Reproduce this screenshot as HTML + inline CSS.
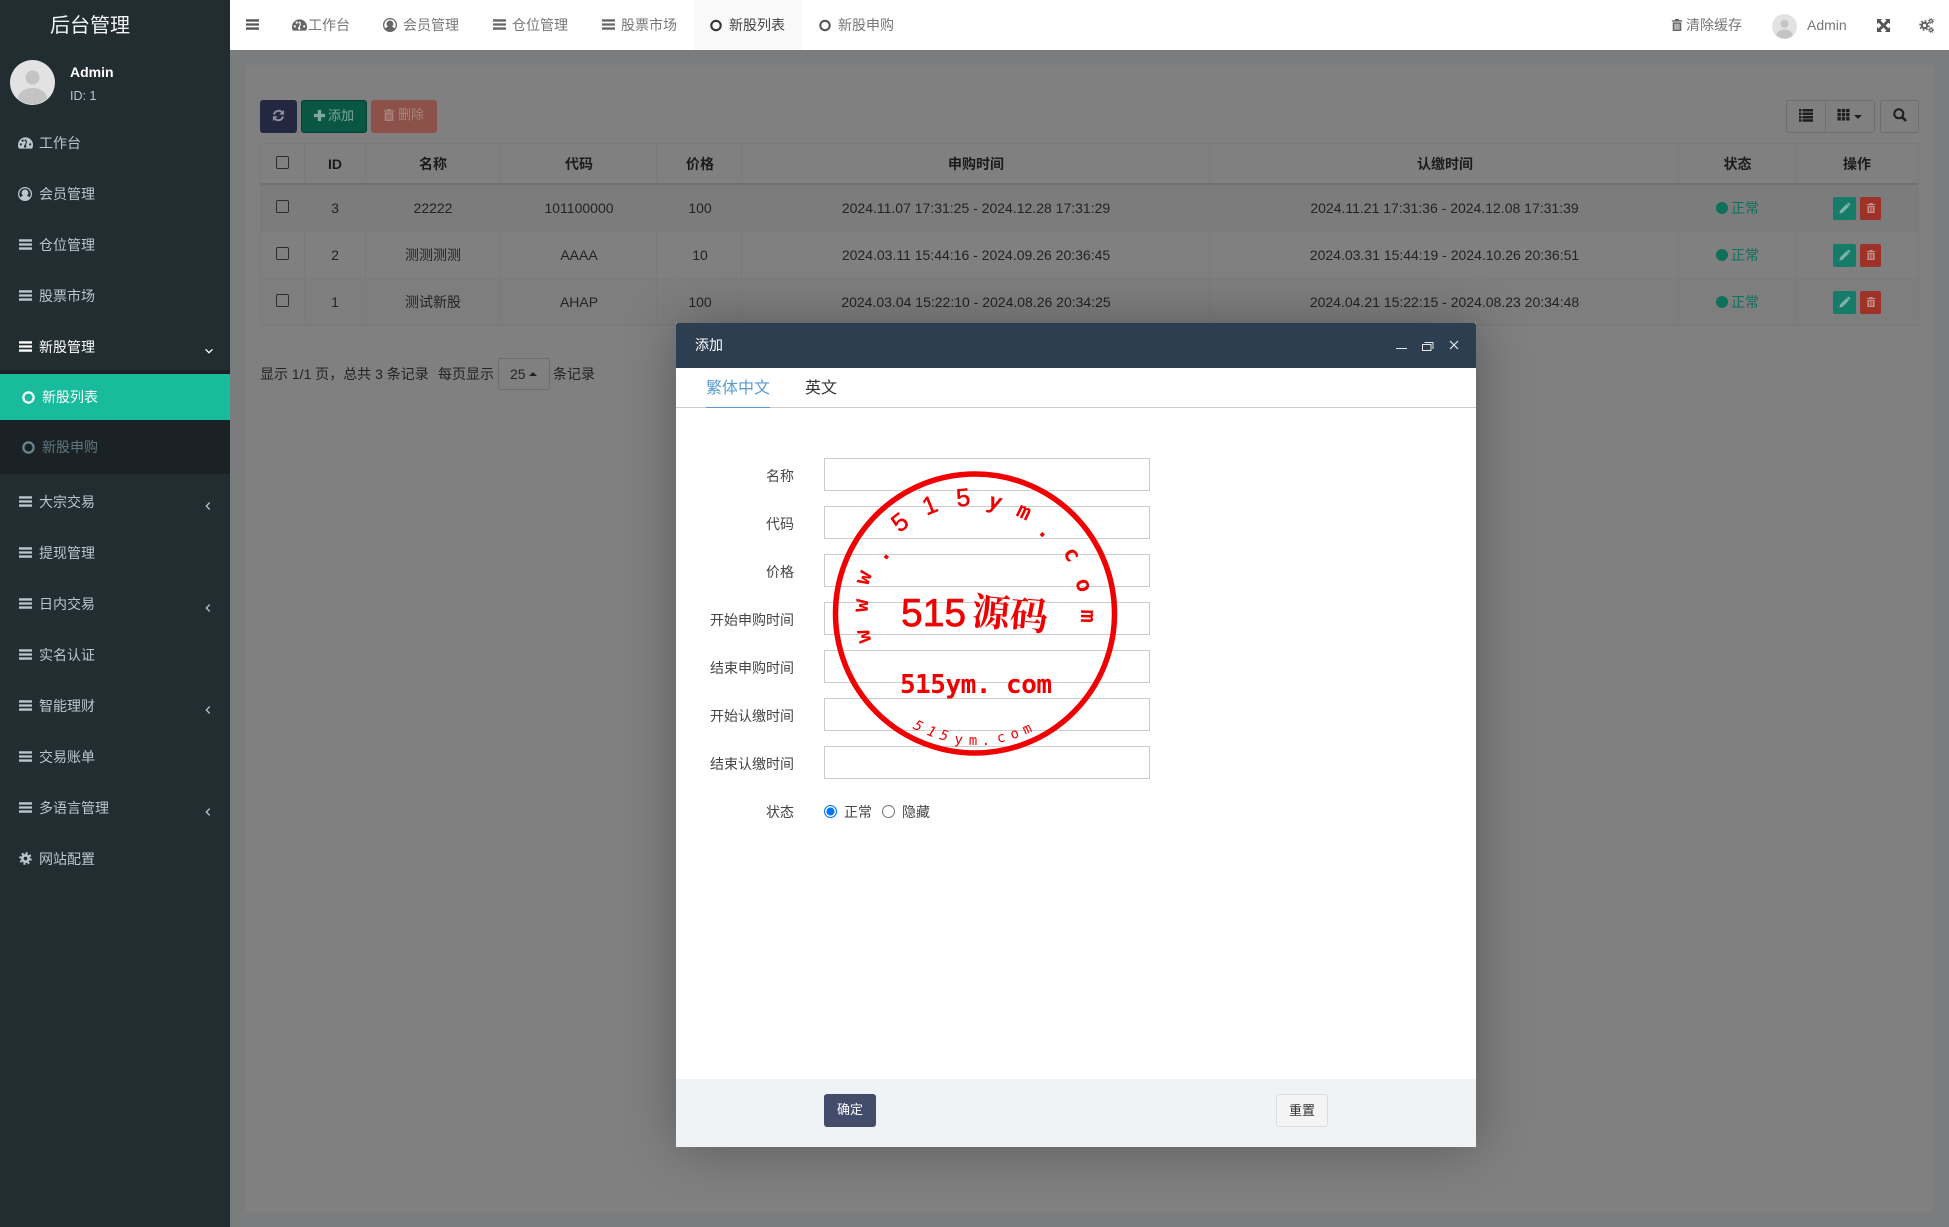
<!DOCTYPE html>
<html lang="zh"><head><meta charset="utf-8"><title>后台管理</title>
<style>
*{box-sizing:border-box}
html,body{margin:0;padding:0}
body{width:1949px;height:1227px;position:relative;overflow:hidden;background:#7b7c7e;font:14px/20px "Liberation Sans","Noto Sans CJK SC",sans-serif;color:#333}
.a,.t,.c,.r,svg.i{position:absolute}
.t{white-space:nowrap;height:20px;line-height:20px}
.c{white-space:nowrap;height:20px;line-height:20px;text-align:center;transform:translateX(-50%)}
.r{white-space:nowrap;height:20px;line-height:20px;text-align:right}
svg.i{fill:currentColor;overflow:visible}
#side{left:0;top:0;width:230px;height:1227px;background:#222d32;color:#b8c7ce}
#top{left:230px;top:0;width:1719px;height:50px;background:#fff;color:#777}
.bd{background:#7a7a7a}
.cb{position:absolute;width:13px;height:13px;border:1px solid #2c2c2c;border-radius:2px;left:276px}
.tb{position:absolute;top:100px;height:33px;border-radius:3px}
.h{font-weight:700;color:#1b1b1b}
.d{color:#232323}
.g{color:#0f6f5c}
.in{position:absolute;left:824px;width:326px;height:33px;border:1px solid #ccc;background:#fff}
.l{position:absolute;left:680px;width:114px;text-align:right;height:20px;line-height:20px;color:#444;white-space:nowrap}
</style></head><body>
<svg width="0" height="0" style="position:absolute">
<defs>
<symbol id="bars" viewBox="0 0 14 14"><path d="M0 1.400h14v2.500H0zM0 5.750h14v2.500H0zM0 10.100h14v2.500H0z"/></symbol>
<symbol id="gauge" viewBox="0 0 16 14"><path fill-rule="evenodd" d="M8 1a8 8 0 0 0-8 8c0 1.600.4 3 1.100 4h13.800c.7-1 1.100-2.400 1.100-4a8 8 0 0 0-8-8zM3 9.600a1.200 1.200 0 1 1 0-2.400 1.200 1.200 0 0 1 0 2.400zM5 5.600a1.200 1.200 0 1 1 0-2.400 1.200 1.200 0 0 1 0 2.400zM8.800 3.600a1.100 1.100 0 1 1-1.600 0 1.100 1.100 0 0 1 1.600 0zM8 12.200a1.700 1.700 0 0 1-.8-3.200l1.700-4 1 .4-1.600 4a1.700 1.700 0 0 1-.3 2.800zM13 9.600a1.200 1.200 0 1 1 0-2.400 1.200 1.200 0 0 1 0 2.400z"/></symbol>
<symbol id="user" viewBox="0 0 14 14"><path fill-rule="evenodd" d="M7 0a7 7 0 1 0 0 14A7 7 0 0 0 7 0zm0 1.300a5.700 5.700 0 0 1 4.500 9.200C11 9.600 10 9 9 8.700a3.400 3.400 0 1 0-4 0c-1 .3-2 .9-2.500 1.800A5.700 5.700 0 0 1 7 1.300z"/></symbol>
<symbol id="ring" viewBox="0 0 14 14"><circle cx="7" cy="7" r="5.500" fill="none" stroke="currentColor" stroke-width="2.400"/></symbol>
<symbol id="cog" viewBox="0 0 14 14"><circle cx="7" cy="7" r="3.400" fill="none" stroke="currentColor" stroke-width="2.800"/><circle cx="7" cy="7" r="5.700" fill="none" stroke="currentColor" stroke-width="2.200" stroke-dasharray="2.200 2.270"/></symbol>
<symbol id="trash" viewBox="0 0 14 14"><path fill-rule="evenodd" d="M5 0h4l.7 1.500H13V3H1V1.500h3.300zM2 4h10v10H2zm2.200 1.500v7h1.100v-7zm2.300 0v7h1.100v-7zm2.300 0v7h1v-7z"/></symbol>
<symbol id="plus" viewBox="0 0 14 14"><path d="M5.200 1h3.600v4.200H13v3.600H8.800V13H5.200V8.800H1V5.200h4.200z"/></symbol>
<symbol id="refresh" viewBox="0 0 14 14"><path d="M2.200 6A5 5 0 0 1 11 3.800M11.800 8A5 5 0 0 1 3 10.200" fill="none" stroke="currentColor" stroke-width="2.200"/><path d="M13 1v5.200H7.800zM1 13V7.800h5.200z"/></symbol>
<symbol id="list" viewBox="0 0 14 14"><path d="M0 1h2.500v2.500H0zM3.500 1H14v2.500H3.500zM0 4.500h2.500V7H0zM3.500 4.500H14V7H3.500zM0 8h2.500v2.500H0zM3.500 8H14v2.500H3.500zM0 11.300h2.500v2.500H0zM3.500 11.300H14v2.500H3.500z"/></symbol>
<symbol id="th" viewBox="0 0 14 14"><path d="M.5 1h3.600v3.600H.5zM5.200 1h3.600v3.600H5.200zM9.900 1h3.600v3.600H9.900zM.5 5.400h3.600V9H.5zM5.200 5.400h3.600V9H5.200zM9.900 5.400h3.600V9H9.900zM.5 9.800h3.600v3.600H.5zM5.200 9.800h3.600v3.600H5.200zM9.900 9.800h3.600v3.600H9.900z"/></symbol>
<symbol id="search" viewBox="0 0 14 14"><circle cx="5.800" cy="5.800" r="4.500" fill="none" stroke="currentColor" stroke-width="2"/><path d="M9 9l4 4" stroke="currentColor" stroke-width="2.600" fill="none"/></symbol>
<symbol id="expand" viewBox="0 0 14 14"><path d="M0 0h5.500L3.900 1.700 7 4.800l3.100-3.100L8.500 0H14v5.500l-1.700-1.600L9.200 7l3.100 3.100L14 8.500V14H8.500l1.600-1.700L7 9.200l-3.100 3.100L5.500 14H0V8.500l1.700 1.600L4.800 7 1.700 3.900 0 5.500z"/></symbol>
<symbol id="pencil" viewBox="0 0 14 14"><path d="M9.300 2.200l2.500 2.500-7 7L1.500 12.500l.8-3.300zM10.300 1.200c.5-.5 1.200-.5 1.700 0l.8.8c.5.500.5 1.200 0 1.700l-.5.5L9.800 1.700z"/></symbol>
<symbol id="ava" viewBox="0 0 45 45"><circle cx="22.500" cy="22.500" r="22.500" fill="#e2e2e2"/><circle cx="22.500" cy="17.500" r="7" fill="#c4c4c4"/><path d="M8 39c0-7 7-11 14.500-11S37 32 37 39a22.500 22.500 0 0 1-29 0z" fill="#c4c4c4"/></symbol>
<symbol id="cl" viewBox="0 0 14 14"><path d="M9 3L5 7l4 4" fill="none" stroke="currentColor" stroke-width="1.500"/></symbol>
</defs></svg>

<!-- content -->
<div class="a" style="left:245px;top:65px;width:1689px;height:1147px;background:#808080;border-radius:4px"></div>
<div class="tb" style="left:260px;width:37px;background:#232840"><svg class="i" style="left:12px;top:9px;color:#8b8e99" width="13" height="13"><use href="#refresh"/></svg></div>
<div class="tb" style="left:301px;width:66px;background:#0a5645;border:1px solid #063f33;color:#7fa89f"><svg class="i" style="left:11px;top:8px" width="13" height="13"><use href="#plus"/></svg><span class="t" style="left:26px;top:5px;font-size:13px">添加</span></div>
<div class="tb" style="left:371px;width:66px;background:#8c5249;color:#a8847e"><svg class="i" style="left:12px;top:9px" width="12" height="12"><use href="#trash"/></svg><span class="t" style="left:27px;top:5px;font-size:13px">删除</span></div>
<div class="tb" style="left:1786px;width:89px;border:1px solid #6e6e6e;color:#1e1e1e"><svg class="i" style="left:12px;top:7px" width="14" height="14"><use href="#list"/></svg><div class="a" style="left:38px;top:0;width:1px;height:31px;background:#6e6e6e"></div><svg class="i" style="left:50px;top:7px" width="13" height="13"><use href="#th"/></svg><div class="a" style="left:67px;top:14px;border:4px solid transparent;border-top-color:#1e1e1e"></div></div>
<div class="tb" style="left:1880px;width:39px;border:1px solid #6e6e6e;color:#1e1e1e"><svg class="i" style="left:12px;top:7px" width="14" height="14"><use href="#search"/></svg></div>

<!-- table -->
<div class="a" style="left:260px;top:143px;width:1659px;height:41px;background:#808080"></div>
<div class="a" style="left:260px;top:184px;width:1659px;height:47.500px;background:#7c7c7c"></div>
<div class="a" style="left:260px;top:231.500px;width:1659px;height:47px;background:#808080"></div>
<div class="a" style="left:260px;top:278.500px;width:1659px;height:47px;background:#7e7e7e"></div>
<div class="a bd" style="left:260px;top:143px;width:1659px;height:1px"></div>
<div class="a" style="left:260px;top:183px;width:1659px;height:2px;background:#707070"></div>
<div class="a bd" style="left:260px;top:231px;width:1659px;height:1px"></div>
<div class="a bd" style="left:260px;top:278px;width:1659px;height:1px"></div>
<div class="a bd" style="left:260px;top:325px;width:1659px;height:1px"></div>
<div class="a bd" style="left:260px;top:143px;width:1px;height:183px"></div>
<div class="a bd" style="left:304px;top:143px;width:1px;height:183px"></div>
<div class="a bd" style="left:365px;top:143px;width:1px;height:183px"></div>
<div class="a bd" style="left:500px;top:143px;width:1px;height:183px"></div>
<div class="a bd" style="left:656px;top:143px;width:1px;height:183px"></div>
<div class="a bd" style="left:741px;top:143px;width:1px;height:183px"></div>
<div class="a bd" style="left:1209px;top:143px;width:1px;height:183px"></div>
<div class="a bd" style="left:1678px;top:143px;width:1px;height:183px"></div>
<div class="a bd" style="left:1795px;top:143px;width:1px;height:183px"></div>
<div class="a bd" style="left:1918px;top:143px;width:1px;height:183px"></div>

<div class="cb" style="top:156px"></div>
<div class="c h" style="left:335px;top:154px">ID</div>
<div class="c h" style="left:433px;top:154px">名称</div>
<div class="c h" style="left:579px;top:154px">代码</div>
<div class="c h" style="left:700px;top:154px">价格</div>
<div class="c h" style="left:976px;top:154px">申购时间</div>
<div class="c h" style="left:1445px;top:154px">认缴时间</div>
<div class="c h" style="left:1737.500px;top:154px">状态</div>
<div class="c h" style="left:1857px;top:154px">操作</div>

<div class="cb" style="top:200px"></div>
<div class="c d" style="left:335px;top:198px">3</div>
<div class="c d" style="left:433px;top:198px">22222</div>
<div class="c d" style="left:579px;top:198px">101100000</div>
<div class="c d" style="left:700px;top:198px">100</div>
<div class="c d" style="left:976px;top:198px">2024.11.07 17:31:25 - 2024.12.28 17:31:29</div>
<div class="c d" style="left:1444.500px;top:198px">2024.11.21 17:31:36 - 2024.12.08 17:31:39</div>

<div class="cb" style="top:247px"></div>
<div class="c d" style="left:335px;top:245px">2</div>
<div class="c d" style="left:433px;top:245px">测测测测</div>
<div class="c d" style="left:579px;top:245px">AAAA</div>
<div class="c d" style="left:700px;top:245px">10</div>
<div class="c d" style="left:976px;top:245px">2024.03.11 15:44:16 - 2024.09.26 20:36:45</div>
<div class="c d" style="left:1444.500px;top:245px">2024.03.31 15:44:19 - 2024.10.26 20:36:51</div>

<div class="cb" style="top:294px"></div>
<div class="c d" style="left:335px;top:292px">1</div>
<div class="c d" style="left:433px;top:292px">测试新股</div>
<div class="c d" style="left:579px;top:292px">AHAP</div>
<div class="c d" style="left:700px;top:292px">100</div>
<div class="c d" style="left:976px;top:292px">2024.03.04 15:22:10 - 2024.08.26 20:34:25</div>
<div class="c d" style="left:1444.500px;top:292px">2024.04.21 15:22:15 - 2024.08.23 20:34:48</div>

<div class="a" style="left:1716px;top:202px;width:12px;height:12px;border-radius:50%;background:#0e6f5b"></div><div class="t g" style="left:1731px;top:198px">正常</div>
<div class="a" style="left:1716px;top:249px;width:12px;height:12px;border-radius:50%;background:#0e6f5b"></div><div class="t g" style="left:1731px;top:245px">正常</div>
<div class="a" style="left:1716px;top:296px;width:12px;height:12px;border-radius:50%;background:#0e6f5b"></div><div class="t g" style="left:1731px;top:292px">正常</div>

<div class="a" style="left:1833px;top:197px;width:23px;height:23px;border-radius:2px;background:#167c67;color:#7fb3a7"><svg class="i" style="left:5px;top:5px" width="13" height="13"><use href="#pencil"/></svg></div>
<div class="a" style="left:1860px;top:197px;width:21px;height:23px;border-radius:2px;background:#9c3228;color:#c99089"><svg class="i" style="left:5.500px;top:6px" width="10" height="10"><use href="#trash"/></svg></div>
<div class="a" style="left:1833px;top:244px;width:23px;height:23px;border-radius:2px;background:#167c67;color:#7fb3a7"><svg class="i" style="left:5px;top:5px" width="13" height="13"><use href="#pencil"/></svg></div>
<div class="a" style="left:1860px;top:244px;width:21px;height:23px;border-radius:2px;background:#9c3228;color:#c99089"><svg class="i" style="left:5.500px;top:6px" width="10" height="10"><use href="#trash"/></svg></div>
<div class="a" style="left:1833px;top:291px;width:23px;height:23px;border-radius:2px;background:#167c67;color:#7fb3a7"><svg class="i" style="left:5px;top:5px" width="13" height="13"><use href="#pencil"/></svg></div>
<div class="a" style="left:1860px;top:291px;width:21px;height:23px;border-radius:2px;background:#9c3228;color:#c99089"><svg class="i" style="left:5.500px;top:6px" width="10" height="10"><use href="#trash"/></svg></div>

<!-- pagination -->
<div class="t d" style="left:260px;top:364px">显示 1/1 页，总共 3 条记录</div>
<div class="t d" style="left:438px;top:364px">每页显示</div>
<div class="a" style="left:498px;top:358px;width:52px;height:32px;border:1px solid #6e6e6e;border-radius:3px"></div>
<div class="t d" style="left:510px;top:364px">25</div>
<div class="a" style="left:529px;top:372px;border:4px solid transparent;border-bottom-color:#222;border-top:0"></div>
<div class="t d" style="left:553px;top:364px">条记录</div>

<!-- sidebar -->
<div class="a" id="side">
 <div class="c" style="left:90px;top:16px;font-size:20px;color:#f4f4f4">后台管理</div>
 <svg class="i" style="left:10px;top:60px" width="45" height="45"><use href="#ava"/></svg>
 <div class="t" style="left:70px;top:62px;font-weight:700;color:#fff">Admin</div>
 <div class="t" style="left:70px;top:86px;font-size:12.500px;color:#b8c7ce">ID: 1</div>

 <svg class="i" style="left:18px;top:136px" width="15" height="14"><use href="#gauge"/></svg><div class="t" style="left:39px;top:133px">工作台</div>
 <svg class="i" style="left:18px;top:187px" width="14" height="14"><use href="#user"/></svg><div class="t" style="left:39px;top:184px">会员管理</div>
 <svg class="i" style="left:18.500px;top:238px" width="13" height="13"><use href="#bars"/></svg><div class="t" style="left:39px;top:235px">仓位管理</div>
 <svg class="i" style="left:18.500px;top:289px" width="13" height="13"><use href="#bars"/></svg><div class="t" style="left:39px;top:286px">股票市场</div>
 <svg class="i" style="left:18.500px;top:340px;color:#fff" width="13" height="13"><use href="#bars"/></svg><div class="t" style="left:39px;top:337px;color:#fff">新股管理</div>
 <svg class="i" style="left:203px;top:345px;color:#fff;transform:rotate(-90deg)" width="12" height="12"><use href="#cl"/></svg>

 <div class="a" style="left:0;top:370px;width:230px;height:104px;background:#1a2226"></div>
 <div class="a" style="left:0;top:374px;width:230px;height:46px;background:#18bc9c"></div>
 <svg class="i" style="left:22px;top:391px;color:#fff" width="13" height="13"><use href="#ring"/></svg><div class="t" style="left:42px;top:387px;color:#fff">新股列表</div>
 <svg class="i" style="left:22px;top:441px;color:#6f8791" width="13" height="13"><use href="#ring"/></svg><div class="t" style="left:42px;top:437px;color:#5f7680">新股申购</div>

 <svg class="i" style="left:18.500px;top:495px" width="13" height="13"><use href="#bars"/></svg><div class="t" style="left:39px;top:492px">大宗交易</div>
 <svg class="i" style="left:18.500px;top:546px" width="13" height="13"><use href="#bars"/></svg><div class="t" style="left:39px;top:543px">提现管理</div>
 <svg class="i" style="left:18.500px;top:597px" width="13" height="13"><use href="#bars"/></svg><div class="t" style="left:39px;top:594px">日内交易</div>
 <svg class="i" style="left:18.500px;top:648px" width="13" height="13"><use href="#bars"/></svg><div class="t" style="left:39px;top:645px">实名认证</div>
 <svg class="i" style="left:18.500px;top:699px" width="13" height="13"><use href="#bars"/></svg><div class="t" style="left:39px;top:696px">智能理财</div>
 <svg class="i" style="left:18.500px;top:750px" width="13" height="13"><use href="#bars"/></svg><div class="t" style="left:39px;top:747px">交易账单</div>
 <svg class="i" style="left:18.500px;top:801px" width="13" height="13"><use href="#bars"/></svg><div class="t" style="left:39px;top:798px">多语言管理</div>
 <svg class="i" style="left:18.500px;top:852px" width="13" height="13"><use href="#cog"/></svg><div class="t" style="left:39px;top:849px">网站配置</div>
 <svg class="i" style="left:202px;top:500px" width="12" height="12"><use href="#cl"/></svg>
 <svg class="i" style="left:202px;top:602px" width="12" height="12"><use href="#cl"/></svg>
 <svg class="i" style="left:202px;top:704px" width="12" height="12"><use href="#cl"/></svg>
 <svg class="i" style="left:202px;top:806px" width="12" height="12"><use href="#cl"/></svg>
</div>

<!-- topbar -->
<div class="a" id="top">
 <svg class="i" style="left:16px;top:18px;color:#555" width="13" height="13"><use href="#bars"/></svg>
 <svg class="i" style="left:62px;top:18px;color:#666" width="15" height="14"><use href="#gauge"/></svg><div class="t" style="left:78px;top:15px">工作台</div>
 <svg class="i" style="left:153px;top:18px;color:#666" width="14" height="14"><use href="#user"/></svg><div class="t" style="left:173px;top:15px">会员管理</div>
 <svg class="i" style="left:263px;top:18px;color:#666" width="13" height="13"><use href="#bars"/></svg><div class="t" style="left:282px;top:15px">仓位管理</div>
 <svg class="i" style="left:372px;top:18px;color:#666" width="13" height="13"><use href="#bars"/></svg><div class="t" style="left:391px;top:15px">股票市场</div>
 <div class="a" style="left:464px;top:0;width:108px;height:50px;background:#f9f9f9"></div>
 <svg class="i" style="left:480px;top:19px;color:#333" width="12" height="13"><use href="#ring"/></svg><div class="t" style="left:499px;top:15px;color:#444">新股列表</div>
 <svg class="i" style="left:589px;top:19px;color:#555" width="12" height="13"><use href="#ring"/></svg><div class="t" style="left:608px;top:15px">新股申购</div>
 <svg class="i" style="left:1441px;top:19px;color:#666" width="12" height="12"><use href="#trash"/></svg><div class="t" style="left:1456px;top:15px">清除缓存</div>
 <svg class="i" style="left:1542px;top:14px" width="25" height="25"><use href="#ava"/></svg>
 <div class="t" style="left:1577px;top:15px">Admin</div>
 <svg class="i" style="left:1647px;top:19px;color:#555" width="13" height="13"><use href="#expand"/></svg>
 <svg class="i" style="left:1689px;top:20px;color:#666" width="11" height="11"><use href="#cog"/></svg>
 <svg class="i" style="left:1698px;top:18px;color:#666" width="6" height="6"><use href="#cog"/></svg>
 <svg class="i" style="left:1698px;top:26.500px;color:#666" width="6" height="6"><use href="#cog"/></svg>
</div>

<!-- modal -->
<div class="a" style="left:676px;top:323px;width:800px;height:824px;background:#fff;box-shadow:1px 1px 50px rgba(0,0,0,.3)"></div>
<div class="a" style="left:676px;top:323px;width:800px;height:45px;background:#2c3e50;border-radius:2px 2px 0 0"></div>
<div class="t" style="left:695px;top:335px;color:#fff;font-size:14px">添加</div>
<div class="a" style="left:1396px;top:348px;width:11px;height:1px;background:#e8e8e8"></div>
<svg class="i" style="left:1420px;top:340px" width="15" height="12"><path d="M2.500 4.500h8.500v6H2.500zM4.500 2.500h8.500v6.500" fill="none" stroke="#e8e8e8" stroke-width="1"/></svg>
<svg class="i" style="left:1449px;top:340px;" width="10" height="10"><path d="M1 1l8 8M9 1l-8 8" stroke="#e8e8e8" stroke-width="1.200" fill="none"/></svg>

<div class="t" style="left:706px;top:378.500px;font-size:16px;color:#5b9bd1">繁体中文</div>
<div class="t" style="left:805px;top:378.500px;font-size:16px;color:#333">英文</div>
<div class="a" style="left:676px;top:407px;width:800px;height:1px;background:#ccc"></div>
<div class="a" style="left:706px;top:407px;width:64px;height:1px;background:#5b9bd1"></div>

<div class="l" style="top:466px">名称</div><div class="in" style="top:458px"></div>
<div class="l" style="top:514px">代码</div><div class="in" style="top:506px"></div>
<div class="l" style="top:562px">价格</div><div class="in" style="top:554px"></div>
<div class="l" style="top:610px">开始申购时间</div><div class="in" style="top:602px"></div>
<div class="l" style="top:658px">结束申购时间</div><div class="in" style="top:650px"></div>
<div class="l" style="top:706px">开始认缴时间</div><div class="in" style="top:698px"></div>
<div class="l" style="top:754px">结束认缴时间</div><div class="in" style="top:746px"></div>
<div class="l" style="top:802px">状态</div>
<div class="a" style="left:824px;top:805px;width:13px;height:13px;border-radius:50%;border:1px solid #0075ff;background:#0075ff;box-shadow:inset 0 0 0 1.500px #fff"></div>
<div class="t" style="left:844px;top:802px;color:#444">正常</div>
<div class="a" style="left:882px;top:805px;width:13px;height:13px;border-radius:50%;border:1px solid #767676;background:#fff"></div>
<div class="t" style="left:902px;top:802px;color:#444">隐藏</div>

<!-- stamp -->
<svg class="a" style="left:820px;top:460px" width="310" height="310" viewBox="820 460 310 310" fill="#ee0000">
 <circle cx="975" cy="613.500" r="139.500" fill="none" stroke="#f00000" stroke-width="5.500"/>
 <g font-family="'Liberation Sans',sans-serif" font-size="25" text-anchor="middle" stroke="#ee0000" stroke-width=".5">
  <text transform="translate(905,529) rotate(-37.700)">5</text>
  <text transform="translate(933,513) rotate(-22)">1</text>
  <text transform="translate(964,506) rotate(-6)">5</text>
 </g>
 <g font-family="'DejaVu Sans Mono',monospace" font-size="22" font-weight="700" text-anchor="middle">
  <text font-style="italic" transform="translate(994,509) rotate(10.700)">y</text>
  <text transform="translate(1021,518) rotate(26)">m</text>
  <text transform="translate(1041,536) rotate(40.500)">.</text>
  <text transform="translate(1066,558) rotate(58.700)">c</text>
  <text transform="translate(1077,587) rotate(75)">o</text>
  <text transform="translate(1081,616) rotate(91.500)">m</text>
  <text transform="translate(888,558) rotate(-55.900)">.</text>
  <text transform="translate(870,580) rotate(-69.700)">w</text>
  <text transform="translate(868,606) rotate(-86)">w</text>
  <text transform="translate(870,635) rotate(-101.600)">w</text>
 </g>
 <text x="901" y="626" font-family="'Liberation Sans',sans-serif" font-size="39" stroke="#ee0000" stroke-width=".7">515</text>
 <text transform="translate(971,624) rotate(5)" font-family="'Noto Serif CJK SC',serif" font-weight="700" font-size="38">源码</text>
 <text x="900" y="693" font-family="'DejaVu Sans Mono',monospace" font-weight="700" font-size="26" textLength="152">515ym. com</text>
 <g font-family="'DejaVu Sans Mono',monospace" font-size="14" text-anchor="middle">
  <text font-style="italic" transform="translate(916,730) rotate(28)">5</text>
  <text font-style="italic" transform="translate(930,736) rotate(21)">1</text>
  <text font-style="italic" transform="translate(943,740) rotate(14.800)">5</text>
  <text transform="translate(958,744) rotate(7.700)">y</text>
  <text transform="translate(973,745) rotate(1)">m</text>
  <text transform="translate(986,745) rotate(-5)">.</text>
  <text transform="translate(1002,742) rotate(-12.400)">c</text>
  <text transform="translate(1016,738) rotate(-19)">o</text>
  <text transform="translate(1029,733) rotate(-25)">m</text>
 </g>
</svg>

<!-- footer -->
<div class="a" style="left:676px;top:1079px;width:800px;height:68px;background:#eff3f6"></div>
<div class="a" style="left:824px;top:1094px;width:52px;height:33px;background:#444c6c;border-radius:3px;color:#fff;text-align:center;line-height:31px;font-size:13px">确定</div>
<div class="a" style="left:1276px;top:1094px;width:52px;height:33px;background:#f4f4f4;border:1px solid #ddd;border-radius:3px;color:#333;text-align:center;line-height:31px;font-size:13px">重置</div>
</body></html>
